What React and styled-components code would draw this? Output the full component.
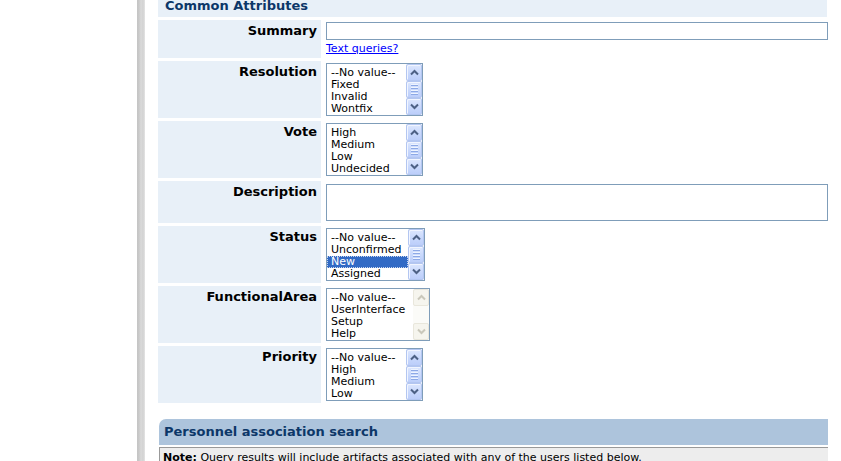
import React from 'react'
import styled, { createGlobalStyle, css } from 'styled-components'

const GlobalStyle = createGlobalStyle`
  html, body {
    margin: 0;
    padding: 0;
    background: #ffffff;
    font-family: "DejaVu Sans", Verdana, sans-serif;
  }
`

const Page = styled.div`
  display: flex;
  height: 461px;
  overflow: hidden;
`

const Gutter = styled.div`
  flex: none;
  width: 137px;
`

const Rail = styled.div`
  flex: none;
  width: 8px;
  background: linear-gradient(to right, #c4c4c4 0%, #c9c9c9 25%, #dadada 50%, #d2d2d2 75%, #e4e4e4 100%);
`

const Main = styled.div`
  flex: none;
  width: 670px;
  margin-left: 13px;
  margin-top: -6px;
`

const SectionHead = styled.div`
  background: #e8f0f8;
  color: #0c3768;
  font: bold 13px/16px "DejaVu Sans", sans-serif;
  padding: 4px 6px 3px 7px;
  margin-right: 1px;
`

const FormGrid = styled.div`
  display: grid;
  grid-template-columns: 163px 1fr;
  column-gap: 2px;
  row-gap: 3px;
  margin-top: 3px;
`

const Label = styled.div`
  background: #e8f0f8;
  text-align: right;
  color: #000;
  font: bold 13px/16px "DejaVu Sans", sans-serif;
  padding: 3px 4px 0 0;
`

const Value = styled.div`
  background: #fff;
  padding: 2px 0 2px 3px;
`

const TextInput = styled.input`
  display: block;
  box-sizing: border-box;
  width: 100%;
  height: 18px;
  margin: 0;
  border: 1px solid #7f9db9;
  background: #fff;
  padding: 0 2px;
  font: 11px "DejaVu Sans", sans-serif;
`

const TextArea = styled.textarea`
  display: block;
  box-sizing: border-box;
  width: 100%;
  height: 37px;
  margin: 1px 0 0;
  border: 1px solid #7f9db9;
  background: #fff;
  resize: none;
  font: 11px "DejaVu Sans", sans-serif;
`

const HelpLink = styled.a`
  display: block;
  margin-top: 2px;
  font: 11px/14px "DejaVu Sans", sans-serif;
  color: #0000ff;
  text-decoration: underline;
  cursor: pointer;
`

const ListBox = styled.div`
  display: flex;
  box-sizing: border-box;
  width: ${p => p.$w}px;
  height: 53px;
  border: 1px solid #7f9db9;
  background: #fff;
`

const Options = styled.div`
  flex: 1;
  padding-top: 3px;
  overflow: hidden;
  font: 11px/12px "DejaVu Sans", sans-serif;
  color: #000;
`

const Option = styled.div`
  padding-left: 4px;
  white-space: nowrap;
  ${p => p.$selected && css`
    background: #316ac5;
    color: #fff;
    outline: 1px dotted #c9d6ee;
    outline-offset: -1px;
  `}
`

const ScrollBar = styled.div`
  flex: none;
  width: 16px;
  display: flex;
  flex-direction: column;
  background: ${p => (p.$disabled ? '#fbfbf8' : '#eef1fb')};
`

const ScrollPart = styled.div`
  box-sizing: border-box;
  display: flex;
  align-items: center;
  justify-content: center;
  border-radius: 2px;
  flex: ${p => (p.$thumb ? '1' : 'none')};
  height: ${p => (p.$thumb ? 'auto' : '17px')};
  ${p => p.$disabled
    ? css`
      border: 1px solid #e9e7dc;
      background: #f6f5ee;
    `
    : css`
      border: 1px solid #b3c6f1;
      background: linear-gradient(to bottom, #dde7fe 0%, #c8d8fc 55%, #bccefa 100%);
      box-shadow: inset 1px 1px 0 #f1f5ff;
    `}
`

const Spacer = styled.div`
  flex: 1;
`

const Grip = styled.div`
  display: flex;
  flex-direction: column;
  gap: 1px;
  span {
    display: block;
    width: 7px;
    height: 1px;
    background: #eef4ff;
    border-bottom: 1px solid #8da9e6;
  }
`

const Chevron = ({ dir, disabled }) => (
  <svg width="9" height="7" viewBox="0 0 9 7">
    <polyline
      points={dir === 'up' ? '1,5.5 4.5,2 8,5.5' : '1,1.5 4.5,5 8,1.5'}
      fill="none"
      stroke={disabled ? '#cac8bb' : '#4d6185'}
      strokeWidth="2"
    />
  </svg>
)

const Select = ({ width, items, selected, disabled }) => (
  <ListBox $w={width}>
    <Options>
      {items.map(item => (
        <Option key={item} $selected={item === selected}>{item}</Option>
      ))}
    </Options>
    <ScrollBar $disabled={disabled}>
      <ScrollPart $disabled={disabled}><Chevron dir="up" disabled={disabled} /></ScrollPart>
      {disabled ? (
        <Spacer />
      ) : (
        <ScrollPart $thumb>
          <Grip><span /><span /><span /><span /></Grip>
        </ScrollPart>
      )}
      <ScrollPart $disabled={disabled}><Chevron dir="down" disabled={disabled} /></ScrollPart>
    </ScrollBar>
  </ListBox>
)

const PanelHead = styled.div`
  margin: 16px 0 0 1px;
  background: #adc4dc;
  border-top-left-radius: 7px;
  color: #0c3768;
  font: bold 13px/16px "DejaVu Sans", sans-serif;
  padding: 5px 0 5px 5px;
`

const NoteBox = styled.div`
  margin: 2px 0 0 1px;
  border-top: 1px solid #999999;
  border-left: 1px solid #999999;
  background: #ededed;
  padding: 3px 3px;
  font: 11px/14px "DejaVu Sans", sans-serif;
  color: #000;
  white-space: nowrap;
  b {
    font-weight: bold;
  }
`

const fields = [
  { label: 'Resolution', width: 97, items: ['--No value--', 'Fixed', 'Invalid', 'Wontfix'] },
  { label: 'Vote', width: 97, items: ['High', 'Medium', 'Low', 'Undecided'] },
  { label: 'Description', textarea: true },
  { label: 'Status', width: 99, items: ['--No value--', 'Unconfirmed', 'New', 'Assigned'], selected: 'New' },
  { label: 'FunctionalArea', width: 104, items: ['--No value--', 'UserInterface', 'Setup', 'Help'], disabled: true },
  { label: 'Priority', width: 97, items: ['--No value--', 'High', 'Medium', 'Low'] },
]

export default function App() {
  return (
    <>
      <GlobalStyle />
      <Page>
        <Gutter />
        <Rail />
        <Main>
          <SectionHead>Common Attributes</SectionHead>
          <FormGrid>
            <Label>Summary</Label>
            <Value>
              <TextInput type="text" />
              <HelpLink>Text queries?</HelpLink>
            </Value>
            {fields.map(f => (
              <React.Fragment key={f.label}>
                <Label>{f.label}</Label>
                <Value>
                  {f.textarea ? (
                    <TextArea />
                  ) : (
                    <Select width={f.width} items={f.items} selected={f.selected} disabled={f.disabled} />
                  )}
                </Value>
              </React.Fragment>
            ))}
          </FormGrid>
          <PanelHead>Personnel association search</PanelHead>
          <NoteBox>
            <b>Note:</b> Query results will include artifacts associated with any of the users listed below.
          </NoteBox>
        </Main>
      </Page>
    </>
  )
}
